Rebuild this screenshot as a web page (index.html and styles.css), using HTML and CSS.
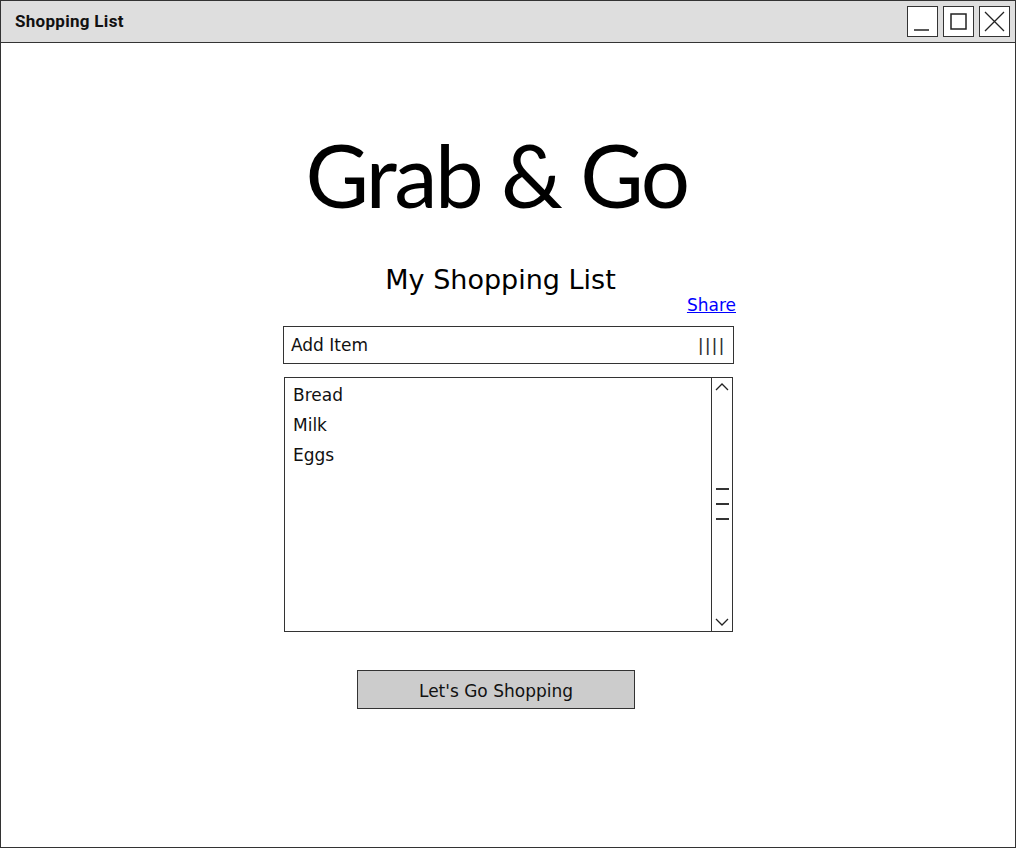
FILE: index.html
```html
<!DOCTYPE html>
<html>
<head>
<meta charset="utf-8">
<link rel="stylesheet" href="styles.css">
</head>
<body>
<div class="window">
  <div class="titlebar">
    <span class="title">Shopping List</span>
    <div class="controls">
      <div class="ctl"><svg width="29" height="29" viewBox="0 0 29 29"><line x1="6" y1="23" x2="21" y2="23" stroke="#222" stroke-width="1.5"/></svg></div>
      <div class="ctl"><svg width="29" height="29" viewBox="0 0 29 29"><rect x="7" y="7" width="15" height="15" fill="none" stroke="#222" stroke-width="1.5"/></svg></div>
      <div class="ctl"><svg width="29" height="29" viewBox="0 0 29 29"><path d="M5 5 L24 24 M24 5 L5 24" stroke="#222" stroke-width="1.3"/></svg></div>
    </div>
  </div>
  <div class="content">
    <h1 class="brand">Grab &amp; Go</h1>
    <h2 class="subtitle">My Shopping List</h2>
    <div class="share-row"><a class="share" href="#">Share</a></div>
    <div class="add-item">
      <span>Add Item</span>
      <span class="bars">||||</span>
    </div>
    <div class="list">
      <ul class="items">
        <li>Bread</li>
        <li>Milk</li>
        <li>Eggs</li>
      </ul>
      <div class="scrollbar">
        <svg class="arrow" width="20" height="14" viewBox="0 0 20 14"><path d="M4 10 L10 4 L16 10" fill="none" stroke="#222" stroke-width="1.3"/></svg>
        <div class="grip"><span></span><span></span><span></span></div>
        <svg class="arrow down" width="20" height="14" viewBox="0 0 20 14"><path d="M4 4 L10 10 L16 4" fill="none" stroke="#222" stroke-width="1.3"/></svg>
      </div>
    </div>
    <div class="btn-row"><button class="go">Let's Go Shopping</button></div>
  </div>
</div>
</body>
</html>
```
FILE: styles.css
```css
html, body {
  margin: 0;
  padding: 0;
  background: #fff;
}
.window {
  width: 1014px;
  height: 846px;
  border: 1.5px solid #333;
  box-sizing: content-box;
  display: flex;
  flex-direction: column;
  background: #fff;
}
.titlebar {
  height: 41px;
  background: #dedede;
  border-bottom: 1.5px solid #333;
  display: flex;
  align-items: center;
  justify-content: space-between;
  padding-left: 14px;
}
.title {
  font-family: Roboto, "Liberation Sans", sans-serif;
  font-weight: bold;
  font-size: 17px;
  letter-spacing: 0.3px;
  color: #111;
  margin-top: -1px;
}
.controls {
  display: flex;
  gap: 5px;
  padding-right: 5px;
}
.ctl {
  width: 29px;
  height: 29px;
  border: 1.5px solid #333;
  background: #fff;
}
.ctl svg { display: block; }
.content {
  display: flex;
  flex-direction: column;
  padding-left: 282px;
  width: 451px;
  font-family: "DejaVu Sans", sans-serif;
}
.brand {
  font-family: Lato, sans-serif;
  font-weight: normal;
  font-size: 87px;
  letter-spacing: -2.5px;
  line-height: 100px;
  margin: 82px 24px 0 0;
  text-align: center;
  color: #000;
}
.subtitle {
  font-weight: normal;
  font-size: 27px;
  line-height: 36px;
  margin: 37px 16px 0 0;
  text-align: center;
  color: #000;
}
.share-row {
  display: flex;
  justify-content: flex-end;
  margin-right: -2px;
  height: 20px;
  margin-top: -3px;
}
.share {
  color: #0000ff;
  font-size: 17px;
  line-height: 20px;
}
.add-item {
  margin-top: 11px;
  height: 36px;
  border: 1.5px solid #333;
  display: flex;
  align-items: center;
  justify-content: space-between;
  padding: 0 7px 0 7px;
  font-size: 17px;
  color: #111;
}
.bars {
  font-family: "Liberation Sans", sans-serif;
  letter-spacing: 2px;
  color: #333;
  font-size: 19px;
}
.list {
  margin-top: 13px;
  margin-left: 1px;
  width: 447px;
  height: 253px;
  border: 1.5px solid #333;
  display: flex;
}
.items {
  list-style: none;
  margin: 0;
  padding: 2px 0 0 8px;
  flex: 1;
  font-size: 17px;
  line-height: 30px;
  color: #111;
}
.scrollbar {
  width: 20px;
  border-left: 1.5px solid #333;
  display: flex;
  flex-direction: column;
  align-items: center;
  padding: 2px 0 2px;
}
.arrow { display: block; }
.arrow.down { margin-top: auto; }
.grip {
  display: flex;
  flex-direction: column;
  gap: 13px;
  margin-top: 94px;
}
.grip span {
  display: block;
  width: 13px;
  height: 2px;
  background: #333;
}
.btn-row {
  display: flex;
  margin-top: 38px;
  padding-left: 74px;
}
.go {
  width: 278px;
  height: 39px;
  background: #cccccc;
  border: 1.5px solid #333;
  font-family: "DejaVu Sans", sans-serif;
  font-size: 17px;
  color: #111;
  padding: 2px 0 0 0;
}
```
